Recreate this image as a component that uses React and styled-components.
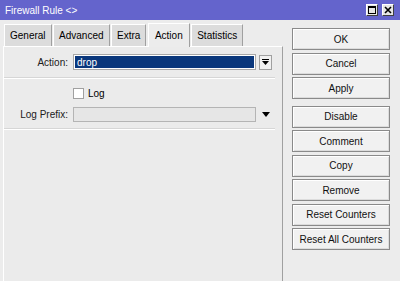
import React from 'react';
import styled, { createGlobalStyle } from 'styled-components';

const Global = createGlobalStyle`
  html, body { margin: 0; padding: 0; }
  body {
    width: 400px; height: 281px; overflow: hidden;
    background: #ececec;
    font-family: "Liberation Sans", Arial, sans-serif;
    font-size: 10px; color: #000;
  }
`;

const Window = styled.div`
  width: 400px; height: 281px;
  display: flex; flex-direction: column;
  background: #ececec; overflow: hidden;
`;

const TitleBar = styled.div`
  height: 20px; flex-shrink: 0;
  background: #6464cc;
  display: flex; align-items: center;
  padding: 0 6px 0 5px;
  color: #fff;
`;

const Title = styled.div`
  flex: 1; font-size: 10px; padding-top: 1px;
`;

const TitleButtons = styled.div`
  display: flex; gap: 4px;
`;

const TitleBtn = styled.div`
  width: 12px; height: 12px; box-sizing: border-box;
  background: #e6e6e6;
  border: 1px solid; border-color: #ffffff #404040 #404040 #ffffff;
  display: flex; align-items: center; justify-content: center;
`;

const Body = styled.div`
  flex: 1; display: flex;
`;

const LeftPane = styled.div`
  width: 280px; padding: 3px 0 0 3px;
  display: flex; flex-direction: column;
`;

const Tabs = styled.div`
  height: 23px; display: flex; align-items: flex-end;
  padding-left: 1px; gap: 1.5px;
`;

const Tab = styled.div`
  height: ${p => (p.$active ? 24 : 22)}px;
  box-sizing: border-box;
  padding: 0 ${p => (p.$active ? 6 : 5)}px;
  margin-bottom: ${p => (p.$active ? -1 : 0)}px;
  position: ${p => (p.$active ? 'relative' : 'static')};
  z-index: ${p => (p.$active ? 1 : 0)};
  background: ${p => (p.$active ? '#ececec' : '#dcdcdc')};
  border: 1px solid; border-bottom: none;
  border-color: #ffffff #a0a0a0 #a0a0a0 #ffffff;
  display: flex; align-items: center;
  white-space: nowrap;
`;

const Panel = styled.div`
  flex: 1; box-sizing: border-box;
  background: #ebebeb;
  border-top: 1px solid #ffffff;
  border-left: 1px solid #ffffff;
  border-right: 1px solid #a0a0a0;
  padding-top: 7px;
  display: flex; flex-direction: column;
`;

const Row = styled.div`
  display: flex; align-items: center;
  height: ${p => p.$h || 16}px;
  margin-top: ${p => p.$mt || 0}px;
`;

const Label = styled.div`
  width: 64px; margin-right: 5px;
  text-align: right; white-space: nowrap;
  color: #202020;
`;

const SelectBox = styled.div`
  width: 183px; height: 16px; box-sizing: border-box;
  background: #0a377c;
  border: 1px solid #a8a8a8;
  box-shadow: inset 0 0 0 1px #ffffff;
  color: #fff; padding-left: 3px;
  display: flex; align-items: center;
`;

const TextField = styled.div`
  width: 183px; height: 15px; box-sizing: border-box;
  background: #e6e6e6;
  border: 1px solid #b4b4b4;
`;

const DropButton = styled.div`
  width: 13px; height: 15px; box-sizing: border-box;
  margin-left: 3px;
  background: #f0f0f0;
  border: 1px solid #a0a0a0;
  display: flex; align-items: center; justify-content: center;
`;

const ArrowSlot = styled.div`
  width: 13px; margin-left: 3px;
  display: flex; align-items: center; justify-content: center;
`;

const Separator = styled.div`
  height: 0; margin: ${p => p.$mt || 7}px 7px 0 0;
  border-top: 1px solid #d6d6d6;
  border-bottom: 1px solid #ffffff;
`;

const CheckWrap = styled.label`
  display: flex; align-items: center; gap: 4px;
  margin-left: 69px;
`;

const CheckBox = styled.div`
  width: 11px; height: 11px; box-sizing: border-box;
  background: #ffffff; border: 1px solid #a0a0a0;
`;

const RightPane = styled.div`
  flex: 1; box-sizing: border-box;
  padding: 8px 10px 0 9px;
  display: flex; flex-direction: column;
`;

const Button = styled.div`
  height: 22px; box-sizing: border-box;
  margin-top: ${p => p.$mt ?? 2.5}px;
  background: #f1f1f1;
  border: 1px solid #8a8a8a;
  box-shadow: inset 1px 1px 0 #ffffff, inset -1px -1px 0 #dcdcdc;
  display: flex; align-items: center; justify-content: center;
  color: #101010; white-space: nowrap;
`;

const tabs = ['General', 'Advanced', 'Extra', 'Action', 'Statistics'];
const buttons = [
  ['OK', 0], ['Cancel', 2.5], ['Apply', 2.5], ['Disable', 6.5], ['Comment', 2.5],
  ['Copy', 2.5], ['Remove', 2.5], ['Reset Counters', 2.5], ['Reset All Counters', 2.5],
];

export default function App() {
  return (
    <Window>
      <Global />
      <TitleBar>
        <Title>Firewall Rule &lt;&gt;</Title>
        <TitleButtons>
          <TitleBtn>
            <svg width="8" height="8" viewBox="0 0 8 8">
              <rect x="0.5" y="0.5" width="7" height="7" fill="none" stroke="#000" />
              <rect x="0" y="0" width="8" height="2" fill="#000" />
            </svg>
          </TitleBtn>
          <TitleBtn>
            <svg width="8" height="8" viewBox="0 0 8 8">
              <path d="M1 1 L7 7 M7 1 L1 7" stroke="#000" strokeWidth="1.6" />
            </svg>
          </TitleBtn>
        </TitleButtons>
      </TitleBar>
      <Body>
        <LeftPane>
          <Tabs>
            {tabs.map(t => (
              <Tab key={t} $active={t === 'Action'}>{t}</Tab>
            ))}
          </Tabs>
          <Panel>
            <Row $h={16}>
              <Label>Action:</Label>
              <SelectBox>drop</SelectBox>
              <DropButton>
                <svg width="7" height="7" viewBox="0 0 7 7">
                  <rect x="0" y="0" width="7" height="1" fill="#000" />
                  <path d="M0 2 L7 2 L3.5 6 Z" fill="#000" />
                </svg>
              </DropButton>
            </Row>
            <Separator $mt={7} />
            <Row $h={11} $mt={9}>
              <CheckWrap>
                <CheckBox />
                <span>Log</span>
              </CheckWrap>
            </Row>
            <Row $h={15} $mt={8}>
              <Label>Log Prefix:</Label>
              <TextField />
              <ArrowSlot>
                <svg width="8" height="5" viewBox="0 0 8 5">
                  <path d="M0 0 L8 0 L4 5 Z" fill="#000" />
                </svg>
              </ArrowSlot>
            </Row>
            <Separator $mt={6} />
          </Panel>
        </LeftPane>
        <RightPane>
          {buttons.map(([b, mt]) => (
            <Button key={b} $mt={mt}>{b}</Button>
          ))}
        </RightPane>
      </Body>
    </Window>
  );
}
